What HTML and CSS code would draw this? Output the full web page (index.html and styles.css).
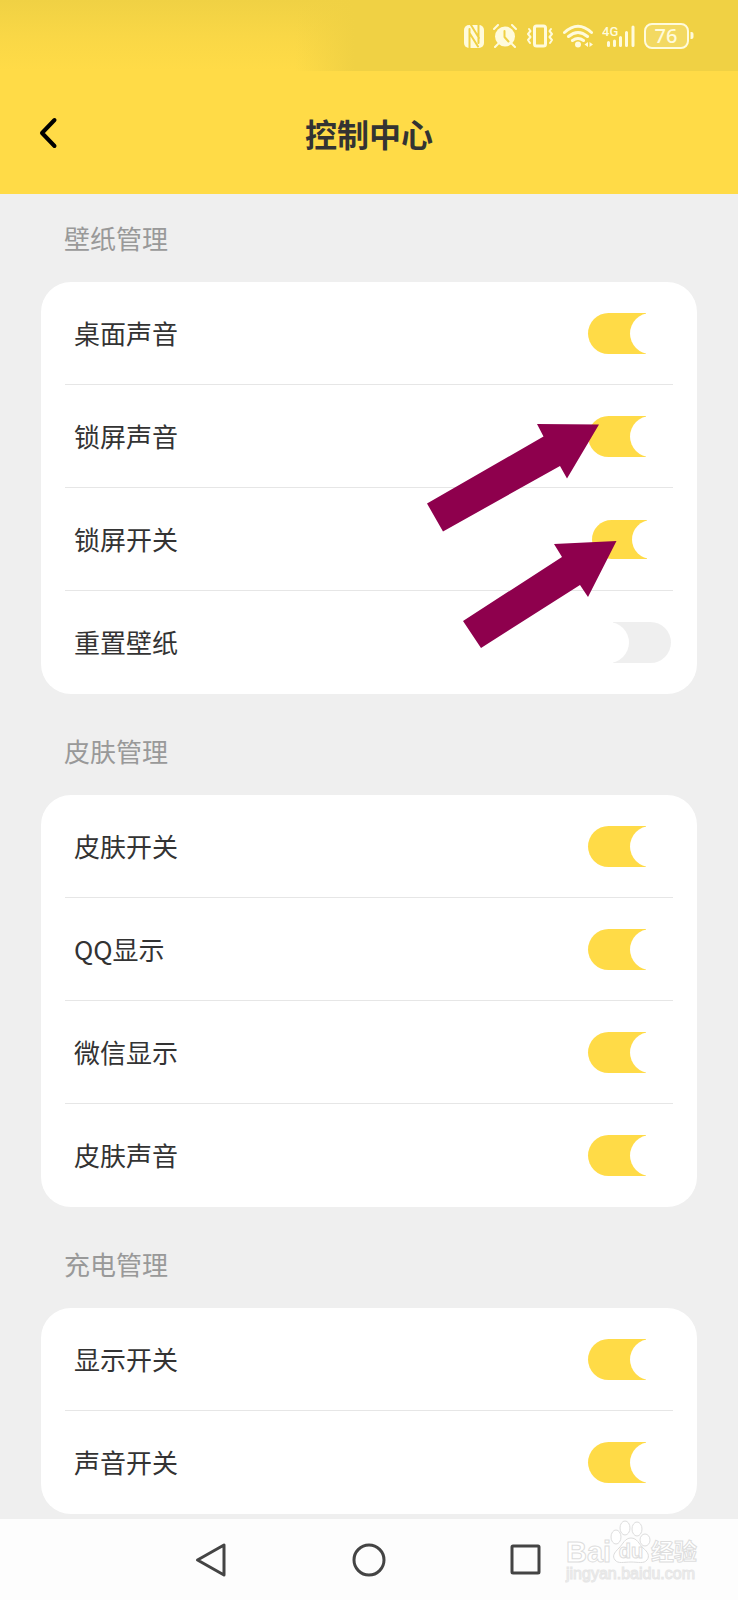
FILE: index.html
```html
<!DOCTYPE html>
<html lang="zh-CN">
<head>
<meta charset="utf-8">
<meta name="viewport" content="width=device-width, initial-scale=1">
<title>控制中心</title>
<link rel="stylesheet" href="styles.css">
</head>
<body>
<div class="status-bar">
  <svg width="20" height="24" viewBox="0 0 20 24" aria-hidden="true">
    <rect width="20" height="23" y="1" rx="5" fill="currentColor"/>
    <path class="icon-cut" d="M5.500 5v19M14.500 1v18M7 1l8 13M5.500 9L14 22.500"/>
  </svg>
  <svg width="24" height="24" viewBox="0 0 24 24" aria-hidden="true">
    <circle cx="12" cy="12.500" r="10" fill="currentColor"/>
    <path class="icon-line" d="M1 5l4-4M23 5l-4-4M5 20l-3 3M19 20l3 3"/>
    <path class="icon-cut" d="M11.500 7v6l4 4.500"/>
  </svg>
  <svg width="28" height="24" viewBox="0 0 28 24" aria-hidden="true">
    <rect class="icon-line icon-thick" x="8.500" y="2" width="11" height="20" rx="2"/>
    <path class="icon-line" d="M3 5l1.500 2L2 10l2.500 3L2 16l2 3M25 5l-1.500 2 2.500 3-2.500 3 2.500 3-2 3"/>
  </svg>
  <svg width="30" height="24" viewBox="0 0 30 24" aria-hidden="true">
    <path class="icon-line icon-thick" d="M1.500 8.500Q15-4 28.500 8.500M5.500 12.500q9.500-8 19 0M9.500 16.500q5.500-4 11 0"/>
    <circle cx="15" cy="20.500" r="3" fill="currentColor"/>
    <path d="M25 18v5l-3.500-2.500zM26.500 18v5l3.500-2.500z" fill="currentColor"/>
  </svg>
  <svg width="33" height="24" viewBox="0 0 33 24" aria-hidden="true">
    <text class="network" x="0" y="12">4G</text>
    <path class="signal" d="M6.500 18.500v3M12.500 17v4.500M18.500 13.500v8M24.500 8.500v13M31 3v18.500"/>
  </svg>
  <svg width="50" height="26" viewBox="0 0 50 26" aria-hidden="true">
    <rect x="1" y="1" width="43" height="24" rx="7" fill="currentColor" fill-opacity=".2" stroke="currentColor" stroke-width="2"/>
    <path d="M46.500 9h1q2 0 2 2v3q0 2-2 2h-1z" fill="currentColor"/>
    <text class="battery" x="22" y="20" text-anchor="middle">76</text>
  </svg>
</div>

<header class="header">
  <button class="back" type="button" aria-label="返回">
    <svg width="20" height="32" viewBox="0 0 20 32" aria-hidden="true"><path d="M16.500 3L4 16l12.500 13"/></svg>
  </button>
  <h1 class="title">控制中心</h1>
</header>

<main class="content">
  <section class="group">
    <h2 class="group-title">壁纸管理</h2>
    <div class="card">
      <label class="row"><span>桌面声音</span><input class="switch" type="checkbox" role="switch" checked></label>
      <label class="row"><span>锁屏声音</span><input class="switch" type="checkbox" role="switch" checked></label>
      <label class="row"><span>锁屏开关</span><input class="switch switch-small" type="checkbox" role="switch" checked></label>
      <label class="row"><span>重置壁纸</span><input class="switch" type="checkbox" role="switch"></label>
      <svg class="arrows" width="200" height="230" viewBox="420 420 200 230" aria-hidden="true">
        <path d="M599 424.500L537 424l6.500 12.500-116.500 67 16 28L560 466l7 12.500z"/>
        <path d="M616.500 541L554 544l8 13-99 64 18 27 99-63 8 12z"/>
      </svg>
    </div>
  </section>

  <section class="group">
    <h2 class="group-title">皮肤管理</h2>
    <div class="card">
      <label class="row"><span>皮肤开关</span><input class="switch" type="checkbox" role="switch" checked></label>
      <label class="row"><span>QQ显示</span><input class="switch" type="checkbox" role="switch" checked></label>
      <label class="row"><span>微信显示</span><input class="switch" type="checkbox" role="switch" checked></label>
      <label class="row"><span>皮肤声音</span><input class="switch" type="checkbox" role="switch" checked></label>
    </div>
  </section>

  <section class="group">
    <h2 class="group-title">充电管理</h2>
    <div class="card">
      <label class="row"><span>显示开关</span><input class="switch" type="checkbox" role="switch" checked></label>
      <label class="row"><span>声音开关</span><input class="switch" type="checkbox" role="switch" checked></label>
    </div>
  </section>
</main>

<nav class="nav">
  <button class="nav-button" type="button" aria-label="后退">
    <svg width="36" height="36" viewBox="0 0 36 36" aria-hidden="true"><path d="M30 3v30L3.500 18z"/></svg>
  </button>
  <button class="nav-button" type="button" aria-label="主屏幕">
    <svg width="36" height="36" viewBox="0 0 36 36" aria-hidden="true"><circle cx="18" cy="18" r="15"/></svg>
  </button>
  <button class="nav-button" type="button" aria-label="最近任务">
    <svg width="36" height="36" viewBox="0 0 36 36" aria-hidden="true"><rect x="4" y="4" width="27" height="27" rx="1"/></svg>
  </button>
  <div class="watermark">
    <svg width="136" height="66" viewBox="0 0 136 66">
      <g class="paw">
        <ellipse cx="51" cy="17" rx="5" ry="7"/>
        <ellipse cx="60" cy="8" rx="5" ry="7"/>
        <ellipse cx="72" cy="9" rx="5" ry="7"/>
        <ellipse cx="80" cy="20" rx="5" ry="6"/>
        <path d="M66 18c-6 0-8 6-12 10-5 5-7 8-4 12 3 4 9 2 16 2s13 2 16-2c3-4 1-8-4-12-4-4-6-10-12-10z"/>
      </g>
      <text class="mark mark-latin" x="1" y="42">Bai</text>
      <text class="mark mark-du" x="66" y="38" text-anchor="middle">du</text>
      <text class="mark mark-han" x="86" y="40">经验</text>
      <text class="mark mark-url" x="1" y="59">jingyan.baidu.com</text>
    </svg>
  </div>
</nav>
</body>
</html>
```

FILE: styles.css
```css
* {
  box-sizing: border-box;
}

body {
  display: flex;
  flex-direction: column;
  min-height: 100vh;
  margin: 0;
  background: #efefef;
  color: #333;
  font-family: "Noto Sans CJK SC", sans-serif;
}

button {
  padding: 0;
  border: 0;
  background: none;
}

svg {
  display: block;
}

/* Status bar */
.status-bar {
  display: flex;
  align-items: center;
  justify-content: flex-end;
  gap: 9px;
  height: 71px;
  padding-right: 44px;
  background:
    linear-gradient(to right, transparent 40%, #f0d144 48%),
    linear-gradient(to bottom, #f0d144, #f9d746 50%, #ffdb47);
  color: #fffbdc;
}

.icon-line,
.icon-cut,
.signal {
  fill: none;
  stroke: currentColor;
  stroke-width: 2;
  stroke-linecap: round;
  stroke-linejoin: round;
}

.icon-cut {
  stroke: #f0d144;
}

.icon-thick,
.signal {
  stroke-width: 3;
}

.network {
  fill: currentColor;
  font: 500 13px Roboto, sans-serif;
}

.battery {
  fill: currentColor;
  font: 500 20px "Noto Sans", sans-serif;
}

/* Header */
.header {
  display: grid;
  grid-template-columns: 60px 1fr 60px;
  align-items: center;
  height: 123px;
  background: #ffdb47;
}

.back {
  justify-self: end;
  margin-right: 2px;
}

.back path {
  fill: none;
  stroke: #000;
  stroke-width: 4;
  stroke-linecap: round;
  stroke-linejoin: round;
}

.title {
  margin: 0;
  font-size: 32px;
  font-weight: 700;
  line-height: 48px;
  text-align: center;
}

/* Setting groups */
.content {
  flex: 1;
  padding: 0 41px;
}

.group + .group {
  margin-top: 13px;
}

.group-title {
  margin: 0;
  padding: 24px 23px;
  color: #999;
  font-size: 26px;
  font-weight: 400;
  line-height: 40px;
}

.card {
  position: relative;
  padding: 0 24px;
  border-radius: 30px;
  background: #fff;
}

.row {
  display: flex;
  align-items: center;
  justify-content: space-between;
  height: 103px;
  padding: 0 2px 0 9px;
  border-bottom: 1px solid #e6e6e6;
  font-size: 26px;
  line-height: 40px;
}

.row:last-of-type {
  border-bottom-color: transparent;
}

.switch {
  display: flex;
  appearance: none;
  width: 83px;
  height: 41px;
  margin: 0;
  border-radius: 21px;
  background: linear-gradient(to left, #efefef 70%, transparent 70%);
}

.switch::before {
  content: "";
  height: 100%;
  aspect-ratio: 1;
  border-radius: 50%;
  background: #fff;
}

.switch:checked {
  justify-content: flex-end;
  background: linear-gradient(to right, #ffdb47 70%, transparent 70%);
}

.switch-small {
  width: 79px;
  height: 39px;
}

.arrows {
  position: absolute;
  top: 138px;
  right: 77px;
  fill: #8e004d;
  pointer-events: none;
}

/* Navigation */
.nav {
  position: relative;
  display: flex;
  align-items: center;
  justify-content: center;
  gap: 121px;
  height: 81px;
  background: #fdfdfd;
}

.nav-button svg {
  fill: none;
  stroke: #444;
  stroke-width: 3;
  stroke-linejoin: round;
}

.watermark {
  position: absolute;
  top: 1px;
  right: 37px;
}

.paw,
.mark {
  fill: #fff;
  stroke: #ddd;
  stroke-width: 1;
}

.mark-latin {
  font: 700 29px "Liberation Sans", sans-serif;
}

.mark-du {
  font: 700 20px "Liberation Sans", sans-serif;
}

.mark-han {
  font: 700 23px "Noto Sans CJK SC", sans-serif;
}

.mark-url {
  fill: #f6f6f6;
  stroke: #e6e6e6;
  font: 400 16px "Liberation Sans", sans-serif;
}
```
